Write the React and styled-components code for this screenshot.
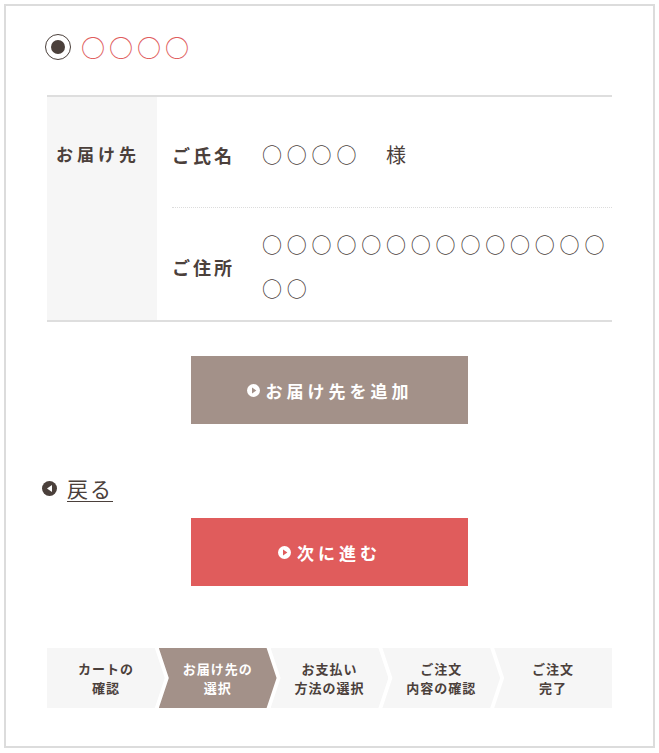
import styled, { createGlobalStyle } from 'styled-components';

const GlobalStyle = createGlobalStyle`
  body {
    margin: 0;
    background: #fff;
    font-family: "Noto Sans CJK JP", "Noto Sans", sans-serif;
    color: #4b403b;
  }
`;

const Frame = styled.div`
  box-sizing: border-box;
  margin: 4px;
  width: 651px;
  height: 744px;
  border: 2px solid #dcdcdc;
  padding: 28px 41px 0;
`;

const RadioRow = styled.label`
  display: flex;
  align-items: center;
  height: 26px;
  gap: 10px;
  margin-left: -2px;
`;

const RadioMark = styled.span`
  box-sizing: border-box;
  width: 26px;
  height: 26px;
  border: 1.5px solid #4b403b;
  border-radius: 50%;
  display: flex;
  align-items: center;
  justify-content: center;

  &::after {
    content: '';
    width: 14px;
    height: 14px;
    border-radius: 50%;
    background: #4b403b;
  }
`;

const RadioText = styled.span`
  color: #e05c5c;
  font-size: 24px;
  letter-spacing: 4px;
  line-height: 26px;
`;

const Table = styled.div`
  display: flex;
  margin-top: 35px;
  border-top: 2px solid #dedede;
  border-bottom: 2px solid #dedede;
`;

const HeadCell = styled.div`
  width: 110px;
  flex-shrink: 0;
  box-sizing: border-box;
  background: #f6f6f6;
  padding: 35px 9px 0;
  font-size: 17px;
  font-weight: bold;
  letter-spacing: 4px;
  line-height: 44px;
`;

const Body = styled.div`
  flex: 1;
  padding-left: 15px;
`;

const Row = styled.div`
  display: flex;
  align-items: center;
  min-height: 110px;
  box-sizing: border-box;
  padding: 15px 0 9px;
  border-top: ${(p) => (p.first ? 'none' : '1px dotted #dcdcdc')};
`;

const Label = styled.div`
  width: 90px;
  flex-shrink: 0;
  font-size: 18px;
  font-weight: bold;
  letter-spacing: 3px;
`;

const Value = styled.div`
  flex: 1;
  font-size: 20px;
  letter-spacing: 4.8px;
  line-height: 44px;
  word-break: break-all;
`;

const ButtonArea = styled.div`
  display: flex;
  justify-content: center;
  margin-top: ${(p) => p.top}px;
`;

const Button = styled.button`
  width: 277px;
  height: 68px;
  border: none;
  background: ${(p) => p.bg};
  color: #fff;
  font-family: inherit;
  font-size: 17px;
  font-weight: bold;
  letter-spacing: 4px;
  display: flex;
  align-items: center;
  justify-content: center;
  gap: 6px;
  cursor: pointer;
`;

const BackLink = styled.a`
  display: flex;
  align-items: center;
  gap: 10px;
  margin: 49px 0 0 -5px;
  font-size: 21px;
  letter-spacing: 2px;
  color: #4b403b;
  text-decoration: none;

  span {
    text-decoration: underline;
    text-underline-offset: 4px;
    text-decoration-thickness: 1px;
  }
`;

const Steps = styled.ol`
  display: flex;
  list-style: none;
  margin: 62px 0 0;
  padding: 0;
  height: 60px;
`;

const Step = styled.li`
  flex: 1;
  display: flex;
  align-items: center;
  justify-content: center;
  text-align: center;
  font-size: 13px;
  font-weight: bold;
  line-height: 19px;
  letter-spacing: 1px;
  background: ${(p) => (p.active ? '#a39189' : '#f6f6f6')};
  color: ${(p) => (p.active ? '#fff' : '#4b403b')};
  margin-left: -6px;
  clip-path: polygon(0 0, calc(100% - 10px) 0, 100% 50%, calc(100% - 10px) 100%, 0 100%, 10px 50%);

  &:first-child {
    margin-left: 0;
    clip-path: polygon(0 0, calc(100% - 10px) 0, 100% 50%, calc(100% - 10px) 100%, 0 100%);
  }

  &:last-child {
    clip-path: polygon(0 0, 100% 0, 100% 100%, 0 100%, 10px 50%);
  }
`;

function PlayIcon({ bg }) {
  return (
    <svg width="13" height="13" viewBox="0 0 13 13">
      <circle cx="6.5" cy="6.5" r="6.5" fill="#fff" />
      <polygon points="5,3.6 9.4,6.5 5,9.4" fill={bg} />
    </svg>
  );
}

function BackIcon() {
  return (
    <svg width="15" height="15" viewBox="0 0 15 15">
      <circle cx="7.5" cy="7.5" r="7.5" fill="#4b403b" />
      <polygon points="10,4 5,7.5 10,11" fill="#fff" />
    </svg>
  );
}

const steps = [
  ['カートの', '確認'],
  ['お届け先の', '選択'],
  ['お支払い', '方法の選択'],
  ['ご注文', '内容の確認'],
  ['ご注文', '完了'],
];

export default function App() {
  return (
    <>
      <GlobalStyle />
      <Frame>
        <RadioRow>
          <RadioMark />
          <RadioText>○○○○</RadioText>
        </RadioRow>

        <Table>
          <HeadCell>お届け先</HeadCell>
          <Body>
            <Row first>
              <Label>ご氏名</Label>
              <Value>○○○○　様</Value>
            </Row>
            <Row>
              <Label>ご住所</Label>
              <Value>○○○○○○○○○○○○○○○○</Value>
            </Row>
          </Body>
        </Table>

        <ButtonArea top={34}>
          <Button bg="#a39189">
            <PlayIcon bg="#a39189" />
            お届け先を追加
          </Button>
        </ButtonArea>

        <BackLink href="#">
          <BackIcon />
          <span>戻る</span>
        </BackLink>

        <ButtonArea top={15}>
          <Button bg="#e05c5c">
            <PlayIcon bg="#e05c5c" />
            次に進む
          </Button>
        </ButtonArea>

        <Steps>
          {steps.map((s, i) => (
            <Step key={i} active={i === 1}>
              {s[0]}
              <br />
              {s[1]}
            </Step>
          ))}
        </Steps>
      </Frame>
    </>
  );
}
